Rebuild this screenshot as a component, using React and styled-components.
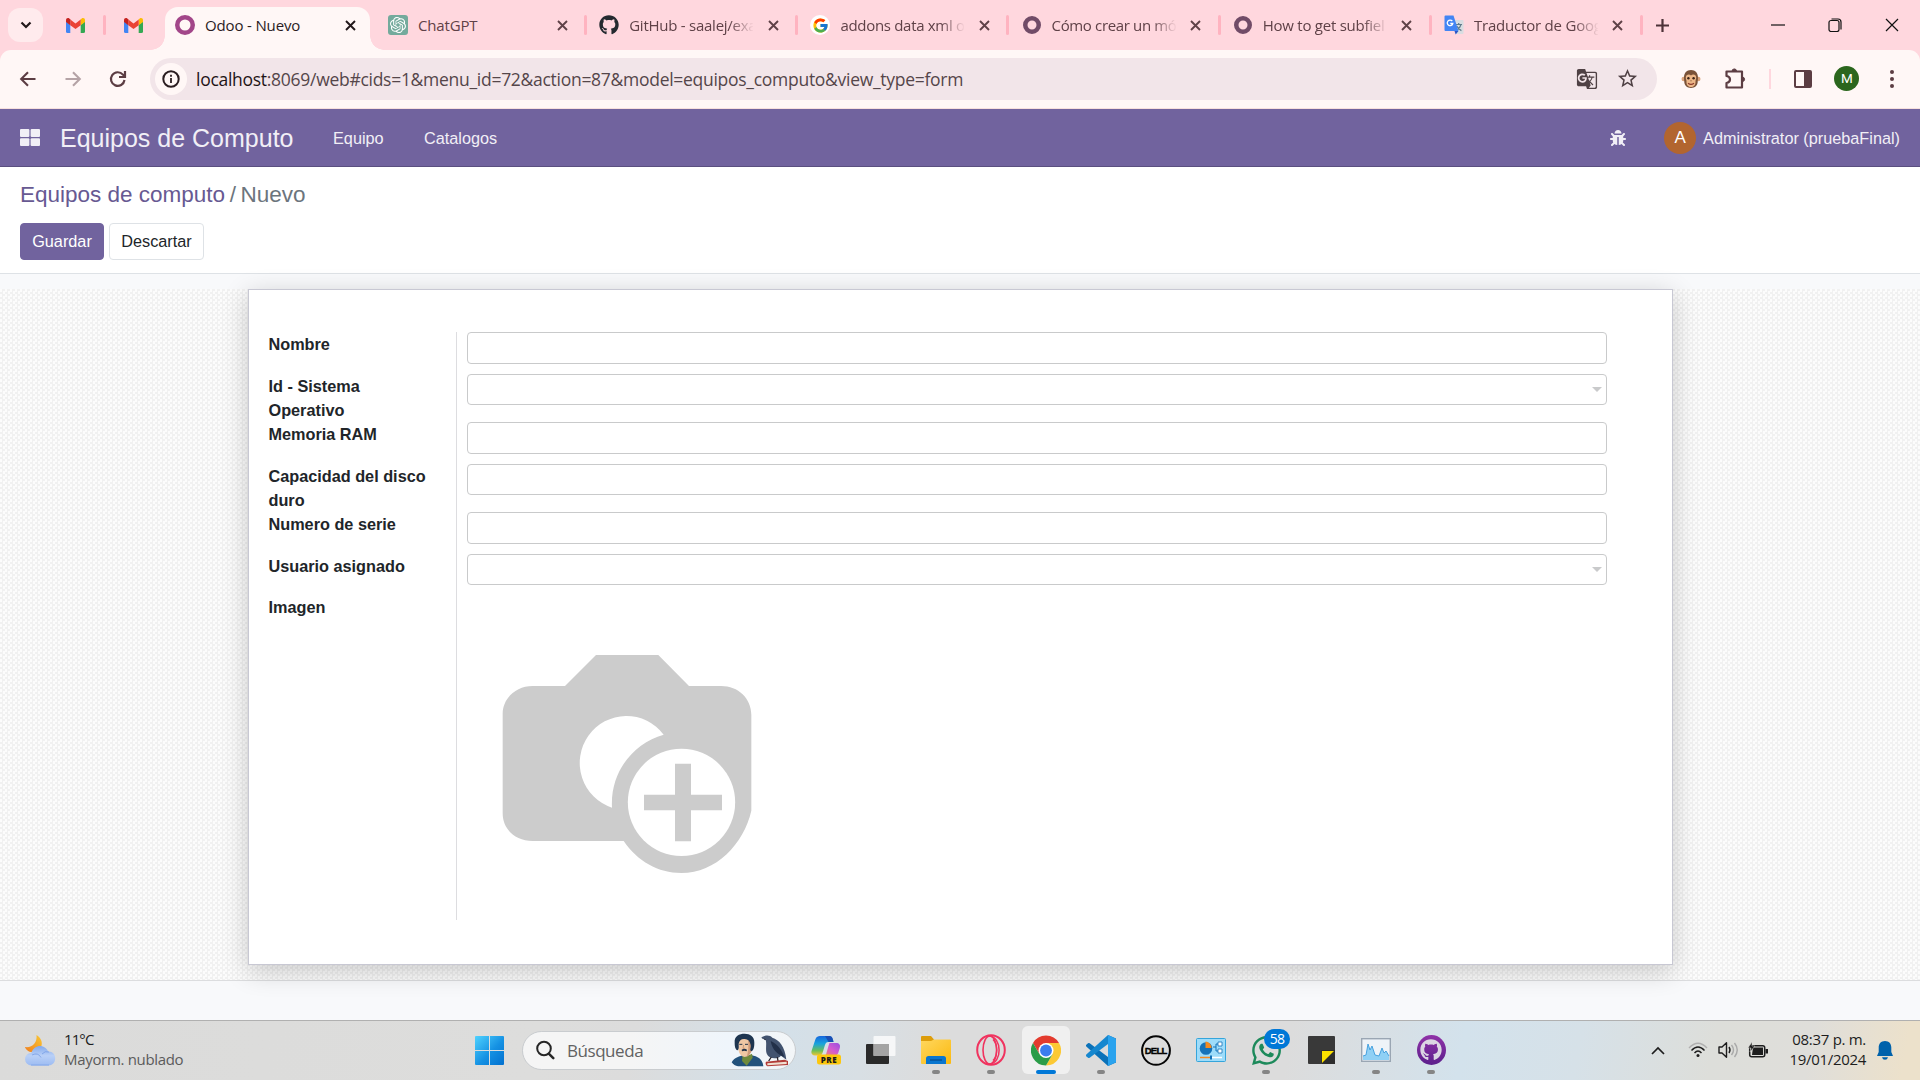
import React from "react";
import styled, { createGlobalStyle } from "styled-components";
import { FaGithub, FaBug, FaWhatsapp } from "react-icons/fa";
import { FcGoogle } from "react-icons/fc";
import { SiOpenai } from "react-icons/si";
import { MdGTranslate, MdStarBorder } from "react-icons/md";

const ui = `"Open Sans", "Noto Sans", sans-serif`;
const arial = `"Liberation Sans", Arial, sans-serif`;

const Global = createGlobalStyle`
  * { box-sizing: border-box; }
  body { margin: 0; overflow: hidden; background: #f8f9fb; }
  svg { display: block; flex: none; }
`;

const Screen = styled.div`
  width: 1920px;
  height: 1080px;
  display: flex;
  flex-direction: column;
  overflow: hidden;
`;

/* ---------- browser ---------- */
const TabStrip = styled.div`
  height: 50px;
  flex: none;
  display: flex;
  align-items: center;
  background: #ffd7de;
  padding-left: 8px;
  font-family: ${ui};
  font-size: 15px;
`;
const TabSearch = styled.div`
  width: 35px;
  height: 34px;
  border-radius: 12px;
  background: #ffebed;
  display: flex;
  align-items: center;
  justify-content: center;
`;
const Pinned = styled.div`
  width: ${(p) => p.$w}px;
  padding-left: ${(p) => p.$pl || 0}px;
  display: flex;
  justify-content: center;
`;
const Separator = styled.div`
  width: 3px;
  height: 20px;
  flex: none;
  border-radius: 2px;
  background: #ffb3c0;
`;
const ActiveTab = styled.div`
  position: relative;
  width: 205px;
  height: 43px;
  margin-top: 7px;
  margin-left: 5px;
  padding: 0 0 7px 10px;
  display: flex;
  align-items: center;
  background: #fff7f6;
  border-radius: 13px 13px 0 0;
  &::before,
  &::after {
    content: "";
    position: absolute;
    bottom: 0;
    width: 14px;
    height: 14px;
  }
  &::before {
    left: -14px;
    background: radial-gradient(circle at 0 0, transparent 13.5px, #fff7f6 14px);
  }
  &::after {
    right: -14px;
    background: radial-gradient(circle at 100% 0, transparent 13.5px, #fff7f6 14px);
  }
`;
const Tab = styled.div`
  width: 211.2px;
  flex: none;
  display: flex;
  align-items: center;
  padding-left: 18px;
`;
const Favicon = styled.div`
  width: 20px;
  height: 20px;
  display: flex;
  align-items: center;
  justify-content: center;
  flex: none;
  overflow: hidden;
  border-radius: ${(p) => p.$radius || 0}px;
  background: ${(p) => p.$bg || "transparent"};
`;
const TabTitle = styled.div`
  width: 124px;
  flex: none;
  margin-left: 10px;
  color: ${(p) => (p.$active ? "#2a1b1e" : "#5f4147")};
  white-space: nowrap;
  letter-spacing: ${(p) => p.$ls || -0.15}px;
  line-height: 22px;
  ${(p) => p.$fade && "mask-image: linear-gradient(90deg, #000 100px, transparent 125px);"}
`;
const CloseSlot = styled.div`
  width: 20px;
  flex: none;
  margin-left: ${(p) => p.$ml}px;
  margin-right: 12px;
  display: flex;
  justify-content: center;
`;
const NewTab = styled.div`
  margin-left: 18px;
`;
const WindowControls = styled.div`
  margin-left: auto;
  display: flex;
  > * {
    width: 57px;
    display: flex;
    justify-content: center;
  }
`;
const ToolbarWrap = styled.div`
  flex: none;
  background: #ffd7de;
`;
const Toolbar = styled.div`
  height: 59px;
  display: flex;
  align-items: center;
  padding: 0 18px 1px 18px;
  background: #fff7f6;
  border-radius: 11px 11px 0 0;
  border-bottom: 1px solid #f7dfdd;
`;
const NavIcons = styled.div`
  display: flex;
  gap: 25px;
  width: 132px;
`;
const AddressBar = styled.div`
  width: 1507px;
  height: 42px;
  border-radius: 21px;
  background: #f2e5e9;
  display: flex;
  align-items: center;
  padding: 0 18px 0 5px;
  font: 17.5px/26px ${ui};
  color: #55464a;
`;
const InfoBadge = styled.div`
  width: 32px;
  height: 32px;
  border-radius: 50%;
  background: #fff7f6;
  display: flex;
  align-items: center;
  justify-content: center;
`;
const Url = styled.div`
  margin-left: 9px;
  flex: 1;
  white-space: nowrap;
  letter-spacing: -0.28px;
  b { font-weight: 400; color: #1f1416; }
`;
const BarIcons = styled.div`
  display: flex;
  align-items: center;
  gap: 18px;
`;
const Extensions = styled.div`
  flex: 1;
  display: flex;
  align-items: center;
  justify-content: space-between;
  padding-left: 24px;
`;
const Divider = styled.div`
  width: 2px;
  height: 20px;
  background: #ffd7de;
`;
const Profile = styled.div`
  width: 25px;
  height: 25px;
  border-radius: 50%;
  background: #2b661d;
  color: #fff;
  font: 13.5px/25px Roboto, sans-serif;
  text-align: center;
`;

/* ---------- application ---------- */
const Navbar = styled.header`
  height: 58px;
  flex: none;
  display: flex;
  align-items: center;
  padding: 0 20px;
  background: #71639e;
  border-bottom: 1px solid #5a4f7f;
  color: #f1eff6;
  font: 16.25px/24px ${arial};
`;
const AppTitle = styled.div`
  margin-left: 20px;
  font-size: 25px;
  width: 273px;
`;
const MenuItem = styled.div`
  width: 91px;
  padding-top: 1px;
`;
const UserArea = styled.div`
  margin-left: auto;
  display: flex;
  align-items: center;
`;
const Avatar = styled.div`
  width: 32px;
  height: 32px;
  margin: 0 7px 0 38px;
  border-radius: 50%;
  background: #b2652f;
  color: #fff;
  font-size: 17px;
  line-height: 32px;
  text-align: center;
`;
const ControlPanel = styled.div`
  height: 107px;
  flex: none;
  background: #fff;
  border-bottom: 1px solid #dee2e6;
  padding: 11px 20px 0;
  font: 16.25px/24px ${arial};
`;
const Breadcrumb = styled.div`
  display: flex;
  font-size: 22.5px;
  line-height: 34px;
  color: #6c757d;
  gap: 4.5px;
  b { font-weight: 400; color: #675992; }
`;
const Buttons = styled.div`
  display: flex;
  gap: 5px;
  margin-top: 11px;
`;
const Button = styled.div`
  height: 37px;
  width: ${(p) => p.$w}px;
  border-radius: 4px;
  border: 1px solid ${(p) => (p.$primary ? "#71639e" : "#dee2e6")};
  background: ${(p) => (p.$primary ? "#71639e" : "#fff")};
  color: ${(p) => (p.$primary ? "#fff" : "#212529")};
  line-height: 35px;
  text-align: center;
`;
const Content = styled.main`
  flex: none;
  height: 746px;
  padding-top: 15px;
  background: #f8f9fb;
`;
const FormView = styled.div`
  height: 692px;
  padding: 0 247px 0 248px;
  border-bottom: 1px solid #dcdddf;
  background: conic-gradient(#f1f1f1 25%, #fcfcfc 0 50%, #f1f1f1 0 75%, #fcfcfc 0) 0 0 / 5px 5px;
`;
const Sheet = styled.div`
  height: 676px;
  background: #fff;
  border: 1px solid #c8c8d3;
  box-shadow: 0 6px 25px rgba(0, 0, 0, 0.2);
  padding: 42px 65px 44px 19.5px;
`;
const Group = styled.div`
  display: flex;
  font: bold 16.25px/24px ${arial};
  color: #212529;
`;
const LabelColumn = styled.div`
  width: 188.5px;
  height: 588px;
  border-right: 1px solid #dddde0;
`;
const Label = styled.div`
  height: ${(p) => p.$h}px;
  padding-right: 26px;
`;
const FieldColumn = styled.div`
  flex: 1;
  margin-left: 10px;
`;
const FieldRow = styled.div`
  height: ${(p) => p.$h}px;
`;
const Input = styled.div`
  height: ${(p) => p.$h}px;
  border: 1px solid #c9cacb;
  border-radius: 4px;
  background: #fff;
  display: flex;
  align-items: center;
  justify-content: flex-end;
  padding-right: 4px;
`;
const Caret = styled.div`
  border: 5px solid transparent;
  border-top-color: #c9cacb;
  border-bottom: 0;
`;

/* ---------- taskbar ---------- */
const Taskbar = styled.footer`
  height: 61px;
  flex: none;
  display: flex;
  align-items: center;
  padding-bottom: 2px;
  border-top: 1px solid #b0b0b0;
  font-family: ${ui};
  background: linear-gradient(100deg, #dbdbda 0, #dddddc 28%, #dcdcdc 33%, #d3e0e9 40%, #d8dfe4 45%, #dcdcdc 49%, #dcdcdc 67%, #d3e2ec 76%, #d6e1e8 82%, #dddeda 89%, #dfdeda 94%, #ece1cb 99%);
`;
const Weather = styled.div`
  width: 450px;
  padding-left: 24px;
  display: flex;
  align-items: center;
  gap: 8px;
`;
const WeatherText = styled.div`
  padding-bottom: 2px;
  font-size: 15px;
  line-height: 20px;
  letter-spacing: -0.32px;
  color: #5b5b5b;
  span { display: block; color: #1d1d1d; letter-spacing: -0.9px; }
`;
const StartSlot = styled.div`
  width: 72px;
  padding-left: 25px;
`;
const SearchBox = styled.div`
  width: 274px;
  height: 39px;
  border-radius: 20px;
  border: 1px solid #c9cccf;
  background: linear-gradient(90deg, #f5f5f5 40%, #eff5fb 75%, #f3f6f8);
  display: flex;
  align-items: center;
  padding: 0 7px 0 12px;
  font-size: 17px;
  color: #626262;
`;
const SearchText = styled.div`
  flex: 1;
  margin-left: 12px;
  letter-spacing: -0.45px;
`;
const Apps = styled.div`
  display: flex;
  padding-left: 6px;
`;
const AppSlot = styled.div`
  position: relative;
  width: 48px;
  height: 48px;
  margin-right: 7px;
  border-radius: 6px;
  display: flex;
  align-items: center;
  justify-content: center;
  background: ${(p) => (p.$active ? "#f0f0f0" : "transparent")};
  ${(p) =>
    p.$run &&
    `&::after {
      content: "";
      position: absolute;
      bottom: 0;
      left: ${p.$active ? 14 : 20}px;
      width: ${p.$active ? 20 : 8}px;
      height: 4px;
      border-radius: 2px;
      background: ${p.$active ? "#0078d7" : "#858585"};
    }`}
`;
const Badge = styled.div`
  position: absolute;
  left: 22px;
  top: 3px;
  width: 26px;
  height: 20px;
  border-radius: 10px;
  background: #0078d7;
  color: #fff;
  font-size: 14px;
  line-height: 20px;
  letter-spacing: -0.7px;
  text-align: center;
`;
const Tray = styled.div`
  margin-left: auto;
  display: flex;
  align-items: center;
  padding-right: 27px;
`;
const TrayIcons = styled.div`
  display: flex;
  align-items: center;
  gap: 9.5px;
  margin-left: 23px;
`;
const Clock = styled.div`
  width: 98px;
  padding-bottom: 3px;
  margin-right: 11px;
  text-align: right;
  font-size: 15px;
  line-height: 20px;
  letter-spacing: -0.3px;
  color: #1d1d1d;
`;

/* ---------- drawings ---------- */
const Close = ({ c = "#5f4147" }) => (
  <svg width="11" height="11" viewBox="0 0 11 11"><path d="M1 1l9 9M10 1l-9 9" stroke={c} strokeWidth="1.9" /></svg>
);
const Gmail = () => (
  <svg width="19" height="15" viewBox="0 0 19 15">
    <path d="M0 3.500l4.300 3.200V15H1.500A1.500 1.500 0 0 1 0 13.500z" fill="#4285f4" />
    <path d="M19 3.500l-4.300 3.200V15h2.800a1.500 1.500 0 0 0 1.500-1.500z" fill="#34a853" />
    <path d="M14.700 1.500l1-.9C17.200 -.5 19 .4 19 2.200V4l-4.300 3.200z" fill="#fbbc04" />
    <path d="M4.300 7.200V1.500l5.200 3.900 5.200-3.900v5.700L9.500 11z" fill="#ea4335" />
    <path d="M0 2.200C0 .4 1.800-.5 3.300.6l1 .9v5.700L0 4z" fill="#c5221f" />
  </svg>
);
const Ring = ({ c, w = 18, s = 4 }) => (
  <svg width="20" height="20" viewBox="0 0 20 20"><circle cx="10" cy="10" r={w / 2 - s / 2} fill="none" stroke={c} strokeWidth={s} /></svg>
);
const TranslateIcon = () => (
  <svg width="20" height="20" viewBox="0 0 20 20">
    <path d="M8 5h10.500a1 1 0 0 1 1 1v12a1 1 0 0 1-1 1H12z" fill="#d9dde1" />
    <path d="M11.500 9.500h6.500M14.700 8v1.500M17 9.500c-.6 2.500-2.200 4.500-4.400 5.800M12.700 11c1 2 2.600 3.600 4.700 4.600" stroke="#5f7d8c" strokeWidth="1.200" fill="none" />
    <path d="M1.500.5h8L14.500 16H1.500a1 1 0 0 1-1-1V1.500a1 1 0 0 1 1-1z" fill="#4285f4" />
    <path d="M10.500 16h4l-2.800 3.500z" fill="#2a56c6" />
    <path d="M8.300 6.200A2.800 2.800 0 1 0 8.800 8.500H6.300" stroke="#fff" strokeWidth="1.300" fill="none" />
  </svg>
);
const Monkey = () => (
  <svg width="20" height="20" viewBox="0 0 20 20">
    <circle cx="2.800" cy="10" r="2.300" fill="#d9a27a" /><circle cx="17.200" cy="10" r="2.300" fill="#d9a27a" />
    <path d="M10 1c4.500 0 7 3 7 7.500 0 2-.3 3-.3 4.500 0 3-2.700 6-6.700 6s-6.700-3-6.700-6c0-1.500-.3-2.500-.3-4.500C3 4 5.500 1 10 1z" fill="#7a5238" />
    <path d="M10 6.500C8.500 4.800 4.800 5.200 4.800 8.600c0 2 .9 2.700.7 4.600-.1 2.700 1.900 4.800 4.500 4.800s4.600-2.100 4.500-4.800c-.2-1.900.7-2.600.7-4.600 0-3.400-3.700-3.800-5.200-2.100z" fill="#edb788" />
    <circle cx="7.400" cy="9.200" r="1.200" fill="#3d2417" /><circle cx="12.600" cy="9.200" r="1.200" fill="#3d2417" />
    <path d="M7 14.300q3 2.200 6 0" stroke="#8c3b2b" strokeWidth="1.200" fill="none" />
    <path d="M9.200 11.800h.5M10.400 11.800h.5" stroke="#7a4a2c" />
  </svg>
);
const Camera = () => (
  <svg width="320" height="320" viewBox="21 45 960 960">
    <path fill="#ccc" d="M408 225H595L687 318H783C835 318 874 355 874 405V692C851 792 768 879 664 879C594 879 533 844 491 783H218C168 783 128 750 128 700V402C128 355 168 318 218 318H315Z" />
    <path fill="#fff" d="M611 464A140 141 0 1 0 456 683C450 575 520 490 611 464Z" />
    <circle cx="664.500" cy="667" r="161" fill="#fff" />
    <path fill="#ccc" d="M645 551h48v93h93v47h-93v93h-48v-93h-93v-47h93z" />
  </svg>
);
const WeatherIcon = () => (
  <svg width="32" height="32" viewBox="0 0 32 32">
    <defs>
      <linearGradient id="moon" x1="1" y1="0" x2="0" y2="1"><stop offset="0" stopColor="#f9c833" /><stop offset="1" stopColor="#f07f1f" /></linearGradient>
      <linearGradient id="cloud" x1="0" y1="0" x2="0" y2="1"><stop offset="0" stopColor="#82a9ec" /><stop offset=".5" stopColor="#b9d0f7" /><stop offset="1" stopColor="#9dbcf2" /></linearGradient>
    </defs>
    <path d="M12.500 1c8 4.500 7 16-3 17C5 18.500 2 16 1 13c7 1 12.500-4 11.500-12z" fill="url(#moon)" />
    <path d="M7.500 31.500a6.300 6.300 0 0 1-.3-12.600C9 14 13 11.500 17 12c3.600.4 6 2.800 7.200 5.500 4.300-.3 7 3 7 6.800 0 4.200-3 7.200-6.700 7.200z" fill="url(#cloud)" />
    <path d="M8 21q6-3 9 2.500M18 20q3-3.500 7-2" stroke="#7199e2" strokeWidth="1" fill="none" opacity=".7" />
    <path d="M7 31h18" stroke="#83a8ea" />
  </svg>
);
const WindowsIcon = () => (
  <svg width="29" height="29" viewBox="0 0 29 29">
    <defs><linearGradient id="win" x1="0" y1="0" x2="1" y2="1"><stop offset="0" stopColor="#4fd2fe" /><stop offset=".55" stopColor="#1591e3" /><stop offset="1" stopColor="#0270cf" /></linearGradient></defs>
    <path fill="url(#win)" d="M1 0h13v14H0V1a1 1 0 0 1 1-1zM15 0h13a1 1 0 0 1 1 1v13H15zM0 15h14v14H1a1 1 0 0 1-1-1zM15 15h14v13a1 1 0 0 1-1 1H15z" />
  </svg>
);
const SearchIcon = () => (
  <svg width="20" height="20" viewBox="0 0 20 20" fill="none" stroke="#262626" strokeLinecap="round"><circle cx="9" cy="8.500" r="6.800" strokeWidth="2" /><path d="M14 13.800l4.300 4.300" strokeWidth="2.500" /></svg>
);
const PoeAndRaven = () => (
  <svg width="58" height="34" viewBox="0 0 174 102">
    <path d="M5 88C14 72 30 70 40 66l24 0c18 5 34 10 36 34H24C16 99 10 95 5 88z" fill="#23527c" />
    <path d="M38 64l8 8 20-10 2 12-18 24-14-14z" fill="#6f8a3c" />
    <path d="M24 18q24-14 42 4l-1 30q-6 20-21 20-15-3-19-22z" fill="#efc7a4" />
    <path d="M54 22q10 2 12 12l-2 22q-6 12-14 15 8-24 4-49z" fill="#cf9a78" />
    <path d="M14 30C12 8 28 2 44 2s30 9 29 27c0 14-2 24-10 26-5-6 1-11-1-19-2-12-8-18-18-18-10-1-16 4-18 14 0 10 2 16-4 20-6-2-8-12-8-22z" fill="#1e3550" />
    <path d="M35 50q8-5 16 0l-1 5q-7-3-14 0z" fill="#24354a" />
    <path d="M28 34h9M45 34h9" stroke="#26364a" strokeWidth="3" />
    <path d="M41 36l-2 10h5" stroke="#b98361" strokeWidth="2" fill="none" />
    <path d="M94 14c8-8 26-10 33 0 20 6 38 26 42 66l-16-12c-10 12-36 10-42-4-6-12 0-32-4-44z" fill="#42536f" />
    <path d="M122 24c20 8 34 28 41 48-20-8-36-20-41-48z" fill="#223049" />
    <path d="M94 14l14 5-2 3z" fill="#1c2434" />
    <path d="M124 72l-8 12M142 72l2 12" stroke="#26242c" strokeWidth="4" />
    <path d="M108 86l56-6 10 4v12l-62 4c-6-4-6-10-4-14z" fill="#b23a36" /><path d="M112 91l58-5v7l-58 4z" fill="#f0dfd0" />
  </svg>
);
const Copilot = () => (
  <svg width="30" height="30" viewBox="0 0 30 30">
    <defs>
      <linearGradient id="cpa" x1="0" y1="0" x2="0" y2="1"><stop offset="0" stopColor="#1667dd" /><stop offset=".4" stopColor="#19a3dd" /><stop offset=".75" stopColor="#6bbf59" /><stop offset="1" stopColor="#f0c533" /></linearGradient>
      <linearGradient id="cpb" x1="1" y1="0" x2="0" y2="1"><stop offset="0" stopColor="#9a4ee0" /><stop offset=".5" stopColor="#d45ccf" /><stop offset="1" stopColor="#f58a5b" /></linearGradient>
    </defs>
    <path d="M9 1h9c3 0 3.600 2 4.500 6h-5c-2 0-3 1-3.700 3.500L11.500 18c-.6 1.700-1.600 2.500-3.500 2.500H4c-3 0-4.300-2-3.300-5L4.500 4C5.500 1.800 7 1 9 1z" fill="url(#cpa)" />
    <path d="M14 1h4c3 0 3.600 2 4.500 6h-5z" fill="#1a4fb4" />
    <path d="M18.500 8H25c3.300 0 4.700 2 3.800 5l-1.600 5c-.8 2-2 3-4.500 3H12c2 0 2.800-1 3.300-2.500l2.300-8z" fill="url(#cpb)" />
    <rect x="6" y="19.500" width="24" height="10" rx="2.500" fill="#fdc70c" />
    <text x="18" y="27.500" textAnchor="middle" fontFamily="Open Sans, sans-serif" fontWeight="800" fontSize="8" letterSpacing=".5" fill="#1a1a1a">PRE</text>
  </svg>
);
const TaskView = () => (
  <svg width="30" height="28" viewBox="0 0 30 28"><rect x="0" y="8" width="23" height="20" rx="1" fill="#2a2a2a" /><rect x="7.500" y="0" width="22" height="20" rx="1" fill="#fff" opacity=".75" /><path d="M7.500 8H23v12H7.500z" fill="#a4a4a4" /></svg>
);
const Folder = () => (
  <svg width="30" height="28" viewBox="0 0 30 28">
    <defs><linearGradient id="fold" x1="0" y1="0" x2="1" y2="1"><stop offset="0" stopColor="#ffd75e" /><stop offset="1" stopColor="#fbb90f" /></linearGradient></defs>
    <path d="M1 0h9l3 3.500V10H0V1a1 1 0 0 1 1-1z" fill="#dd9d0b" /><path d="M0 5h10l3-1.500h16a1 1 0 0 1 1 1V27a1 1 0 0 1-1 1H1a1 1 0 0 1-1-1z" fill="url(#fold)" />
    <path d="M5 28v-5.500a2.500 2.500 0 0 1 2.500-2.500h15a2.500 2.500 0 0 1 2.500 2.500V28z" fill="#0a76cf" /><path d="M9 24h12" stroke="#064b8a" strokeWidth="1.200" />
  </svg>
);
const OperaGX = () => (
  <svg width="30" height="32" viewBox="0 0 30 32" fill="none" stroke="#f0335f"><ellipse cx="15" cy="16" rx="13.800" ry="14.800" strokeWidth="2" /><ellipse cx="13.800" cy="16" rx="6.800" ry="14" strokeWidth="1.600" /><path d="M13 2c13 0 14 28 0 28" strokeWidth="1.500" /><path d="M17 5.500c5 5 5 16 0 21" strokeWidth="1.300" /></svg>
);
const Chrome = () => (
  <svg width="30" height="31" viewBox="-15 -15 30 30">
    <path d="M-13 -7.500A15 15 0 0 1 13 -7.500H0L-6.500 3.750z" fill="#e33b2e" />
    <path d="M13 -7.500A15 15 0 0 1 0 15L6.500 3.750 0 -7.500z" fill="#fcc934" />
    <path d="M0 15A15 15 0 0 1-13-7.500L-6.500 3.750 6.500 3.750z" fill="#2b9c48" />
    <circle r="7.500" fill="#fff" /><circle r="5.900" fill="#3b7ded" />
  </svg>
);
const VSCode = () => (
  <svg width="30" height="31" viewBox="0 0 30 31">
    <path d="M22 0l8 3.500v24L22 31 2.500 13.500.3 11.500q-.8-.8 0-1.700L2 8.200q.8-.6 1.700 0L22 22z" fill="#0b72b9" />
    <path d="M.3 19.500q-.8.8 0 1.700L2 22.800q.8.600 1.700 0L22 9V0L2.500 17.500z" fill="#1687cf" />
    <path d="M22 0l7 3.200q1 .5 1 1.500v21.600q0 1-1 1.500L22 31z" fill="#2aa3ee" />
  </svg>
);
const Dell = () => (
  <svg width="30" height="31" viewBox="0 0 30 31"><ellipse cx="15" cy="15.500" rx="13.900" ry="14.300" fill="none" stroke="#050505" strokeWidth="2" /><text x="14.600" y="18.800" textAnchor="middle" fontFamily="Liberation Sans, Arial" fontWeight="bold" fontSize="9.500" letterSpacing="-.8" stroke="#050505" strokeWidth=".4">DELL</text></svg>
);
const ControlPanelIcon = () => (
  <svg width="30" height="24" viewBox="0 0 30 24"><rect x=".5" y=".5" width="29" height="23" rx="1" fill="#9edcfa" stroke="#35a5db" /><circle cx="10" cy="10.500" r="6.300" fill="#1572b8" /><path d="M10 10V3.500a6.500 6.500 0 0 1 6 6.500z" fill="#f58a1f" transform="translate(-.5 0)" /><path d="M17 9h3V6h4M20 9v4h4" stroke="#1572b8" fill="none" /><path d="M22 4h4v4h-4zM22 11h4v4h-4z" fill="#fff" stroke="#1572b8" strokeWidth=".8" /><path d="M4 19.500h12" stroke="#f58a1f" strokeWidth="1.500" /><path d="M16 19.500h10" stroke="#fff" strokeWidth="1.500" /><path d="M15 17.500v4" stroke="#1572b8" strokeWidth="2" /></svg>
);
const Sticky = () => (
  <svg width="27" height="28" viewBox="0 0 27 28"><path d="M1 0h25a1 1 0 0 1 1 1v13L13.500 28H1a1 1 0 0 1-1-1V1a1 1 0 0 1 1-1z" fill="#393939" /><path d="M13.500 14H27v14H13.500z" fill="#2d2d2d" /><path d="M14 15h12L14 27z" fill="#fce100" /></svg>
);
const Monitor = () => (
  <svg width="30" height="24" viewBox="0 0 30 24"><rect x=".7" y=".7" width="28.600" height="22.600" fill="#eef3f8" stroke="#9aa6b3" strokeWidth="1.400" /><path d="M2 18l3-1 2-11 2 6 2-4 3 9 4 1 3-8 2 5 2-2 3 5v4H2z" fill="#8fd0f5" /><path d="M2 18l3-1 2-11 2 6 2-4 3 9 4 1 3-8 2 5 2-2 3 5" fill="none" stroke="#3a9bdc" strokeWidth=".9" /></svg>
);
const GithubDesktop = styled.div`
  width: 29px;
  height: 30px;
  border-radius: 50%;
  background: linear-gradient(#9032a8, #5c1f8c);
  display: flex;
  align-items: center;
  justify-content: center;
  color: #dcd5e3;
`;
const Extension = () => (
  <svg width="23" height="23" viewBox="0 0 23 23" fill="none" stroke="#5c3d43" strokeWidth="2.200" strokeLinejoin="round"><path d="M2.500 4.500H18V20.500H2.500V16q3.500-.5 3.500-3.500T2.500 9z" /><path d="M8 4.500a2.300 2.600 0 0 1 4.600 0zM18 10a2.600 2.300 0 0 1 0 4.600z" fill="#5c3d43" strokeWidth="1" /></svg>
);

const tabs = [
  { title: "ChatGPT", bg: "#74aa9c", radius: 3, icon: <SiOpenai size={16} color="#fff" /> },
  { title: "GitHub - saalej/exa", fade: true, ls: -0.25, icon: <FaGithub size={20} color="#24292f" /> },
  { title: "addons data xml o", fade: true, ls: -0.3, bg: "#fff", radius: 10, icon: <FcGoogle size={17} /> },
  { title: "Cómo crear un mó", fade: true, ls: -0.35, icon: <Ring c="#714b67" s={4.5} /> },
  { title: "How to get subfiel", fade: true, ls: -0.25, icon: <Ring c="#714b67" s={4.5} /> },
  { title: "Traductor de Goog", fade: true, ls: -0.2, icon: <TranslateIcon /> },
];

const fields = [
  { label: "Nombre", row: 42, h: 32 },
  { label: "Id - Sistema Operativo", row: 48, h: 31, select: true },
  { label: "Memoria RAM", row: 42, h: 32 },
  { label: "Capacidad del disco duro", row: 48, h: 31 },
  { label: "Numero de serie", row: 42, h: 32 },
  { label: "Usuario asignado", row: 41, h: 31, select: true },
];

const apps = [
  { icon: <Copilot /> },
  { icon: <TaskView /> },
  { icon: <Folder />, run: true },
  { icon: <OperaGX />, run: true },
  { icon: <Chrome />, run: true, active: true },
  { icon: <VSCode />, run: true },
  { icon: <Dell /> },
  { icon: <ControlPanelIcon /> },
  { icon: <FaWhatsapp size={33} color="#1d8a5b" />, run: true, badge: "58" },
  { icon: <Sticky /> },
  { icon: <Monitor />, run: true },
  { icon: <GithubDesktop><FaGithub size={22} /></GithubDesktop>, run: true },
];

export default function App() {
  return (
    <Screen>
      <Global />
      <TabStrip>
        <TabSearch>
          <svg width="12" height="8" viewBox="0 0 12 8"><path d="M1.500 1.500L6 6l4.500-4.500" fill="none" stroke="#22181a" strokeWidth="2.200" /></svg>
        </TabSearch>
        <Pinned $w={60} $pl={4}><Gmail /></Pinned>
        <Separator />
        <Pinned $w={54}><Gmail /></Pinned>
        <ActiveTab>
          <Favicon><Ring c="#a24689" w={20} s={4.5} /></Favicon>
          <TabTitle $active>Odoo - Nuevo</TabTitle>
          <CloseSlot $ml={11}><Close c="#22181a" /></CloseSlot>
        </ActiveTab>
        {tabs.map((t) => (
          <Tab key={t.title}>
            <Favicon $bg={t.bg} $radius={t.radius}>{t.icon}</Favicon>
            <TabTitle $fade={t.fade} $ls={t.ls}>{t.title}</TabTitle>
            <CloseSlot $ml={10}><Close /></CloseSlot>
            <Separator />
          </Tab>
        ))}
        <NewTab>
          <svg width="15" height="15" viewBox="0 0 15 15"><path d="M7.500 1v13M1 7.500h13" stroke="#4d3238" strokeWidth="2.200" /></svg>
        </NewTab>
        <WindowControls>
          <div><svg width="14" height="14" viewBox="0 0 14 14"><path d="M0 7h14" stroke="#111" strokeWidth="1.200" /></svg></div>
          <div><svg width="14" height="14" viewBox="0 0 14 14" fill="none" stroke="#111" strokeWidth="1.200"><rect x="1" y="2.500" width="10" height="11" rx="2" /><path d="M3.500 1H10a3 3 0 0 1 3 3v7.500" /></svg></div>
          <div><svg width="14" height="14" viewBox="0 0 14 14"><path d="M1 1l12 12M13 1L1 13" stroke="#111" strokeWidth="1.200" /></svg></div>
        </WindowControls>
      </TabStrip>
      <ToolbarWrap>
        <Toolbar>
          <NavIcons>
            <svg width="20" height="20" viewBox="0 0 20 20" fill="none" stroke="#5c3d43" strokeWidth="2.100"><path d="M17.500 10H3.500M10 3.200L3.200 10l6.800 6.800" /></svg>
            <svg width="20" height="20" viewBox="0 0 20 20" fill="none" stroke="#b5a3a6" strokeWidth="2.100"><path d="M2.500 10h14M10 3.200l6.800 6.800-6.800 6.800" /></svg>
            <svg width="20" height="20" viewBox="0 0 20 20" fill="none" stroke="#5c3d43" strokeWidth="2.200"><path d="M16.500 11a6.800 6.800 0 1 1-1.600-5.400L17 7.800" /><path d="M17 2v6h-6" /></svg>
          </NavIcons>
          <AddressBar>
            <InfoBadge>
              <svg width="18" height="18" viewBox="0 0 18 18" fill="none" stroke="#2a1d20" strokeWidth="2"><circle cx="9" cy="9" r="7.700" /><path d="M9 8v5M9 4.800v1.900" strokeWidth="1.800" /></svg>
            </InfoBadge>
            <Url><b>localhost</b>:8069/web#cids=1&amp;menu_id=72&amp;action=87&amp;model=equipos_computo&amp;view_type=form</Url>
            <BarIcons>
              <MdGTranslate size={22} color="#4f4144" />
              <MdStarBorder size={23} color="#4f4144" />
            </BarIcons>
          </AddressBar>
          <Extensions>
            <Monkey />
            <Extension />
            <Divider />
            <svg width="18" height="18" viewBox="0 0 18 18"><rect x="1" y="1" width="16" height="16" rx="1" fill="none" stroke="#5c3d43" strokeWidth="2" /><path d="M10 1h7v16h-7z" fill="#5c3d43" /></svg>
            <Profile>M</Profile>
            <svg width="20" height="20" viewBox="0 0 20 20" fill="#5c3d43"><circle cx="10" cy="3" r="2" /><circle cx="10" cy="10" r="2" /><circle cx="10" cy="17" r="2" /></svg>
          </Extensions>
        </Toolbar>
      </ToolbarWrap>

      <Navbar>
        <svg width="20" height="17" viewBox="0 0 20 17" fill="#f1eff6"><rect width="9.400" height="8" rx="1" /><rect x="10.600" width="9.400" height="8" rx="1" /><rect y="9.200" width="9.400" height="7.800" rx="1" /><rect x="10.600" y="9.200" width="9.400" height="7.800" rx="1" /></svg>
        <AppTitle>Equipos de Computo</AppTitle>
        <MenuItem>Equipo</MenuItem>
        <MenuItem>Catalogos</MenuItem>
        <UserArea>
          <FaBug size={16} />
          <Avatar>A</Avatar>
          Administrator (pruebaFinal)
        </UserArea>
      </Navbar>
      <ControlPanel>
        <Breadcrumb><b>Equipos de computo</b><span>/</span><span>Nuevo</span></Breadcrumb>
        <Buttons>
          <Button $primary $w={84}>Guardar</Button>
          <Button $w={95}>Descartar</Button>
        </Buttons>
      </ControlPanel>
      <Content>
        <FormView>
          <Sheet>
            <Group>
              <LabelColumn>
                {fields.map((f) => <Label key={f.label} $h={f.row}>{f.label}</Label>)}
                <Label $h={24}>Imagen</Label>
              </LabelColumn>
              <FieldColumn>
                {fields.map((f) => (
                  <FieldRow key={f.label} $h={f.row}><Input $h={f.h}>{f.select && <Caret />}</Input></FieldRow>
                ))}
                <FieldRow $h={320}><Camera /></FieldRow>
              </FieldColumn>
            </Group>
          </Sheet>
        </FormView>
      </Content>

      <Taskbar>
        <Weather>
          <WeatherIcon />
          <WeatherText><span>11°C</span>Mayorm. nublado</WeatherText>
        </Weather>
        <StartSlot><WindowsIcon /></StartSlot>
        <SearchBox>
          <SearchIcon />
          <SearchText>Búsqueda</SearchText>
          <PoeAndRaven />
        </SearchBox>
        <Apps>
          {apps.map((a, i) => (
            <AppSlot key={i} $run={a.run} $active={a.active}>
              {a.icon}
              {a.badge && <Badge>{a.badge}</Badge>}
            </AppSlot>
          ))}
        </Apps>
        <Tray>
          <svg width="14" height="9" viewBox="0 0 14 9"><path d="M1 8l6-6 6 6" fill="none" stroke="#1d1d1d" strokeWidth="1.700" /></svg>
          <TrayIcons>
            <svg width="20" height="16" viewBox="0 0 20 16" fill="none" stroke="#1d1d1d" strokeWidth="1.400"><path d="M1 6q9-9.500 18 0" stroke="#b0b0b0" /><path d="M3.500 8.500q6.500-7 13 0M6.500 11q3.500-4 7 0" /><circle cx="10" cy="13.500" r="1.500" fill="#1d1d1d" stroke="none" /></svg>
            <svg width="21" height="18" viewBox="0 0 21 18" fill="none" stroke="#1d1d1d" strokeWidth="1.400"><path d="M1 6h3l4.500-4.200v14.400L4 12H1z" strokeLinejoin="round" /><path d="M11 6q2 3 0 6" /><path d="M13.500 4q4 5 0 10M16.500 2q5.500 7 0 14" stroke="#a9a9a9" /></svg>
            <svg width="20" height="16" viewBox="0 0 20 16"><rect x="1.700" y="3.700" width="15" height="11" rx="2" fill="none" stroke="#1d1d1d" strokeWidth="1.500" /><path d="M4 13l1-7.500h10V13z" fill="#1d1d1d" /><path d="M17.500 7h2.500v4.500h-2.500z" fill="#1d1d1d" /><path d="M4 0L0 6h3L2 10l5-6H4z" fill="#1d1d1d" stroke="#dfdeda" strokeWidth=".5" /></svg>
          </TrayIcons>
          <Clock>08:37 p. m.<br />19/01/2024</Clock>
          <svg width="16" height="19" viewBox="0 0 16 19" fill="#0062ab"><path d="M8 0c4 0 6.300 2.800 6.300 6.500v4.500L16 15H0l1.700-4V6.500C1.700 2.800 4 0 8 0zM5 16.200h6q-.6 2.500-3 2.500t-3-2.500z" /></svg>
        </Tray>
      </Taskbar>
    </Screen>
  );
}
